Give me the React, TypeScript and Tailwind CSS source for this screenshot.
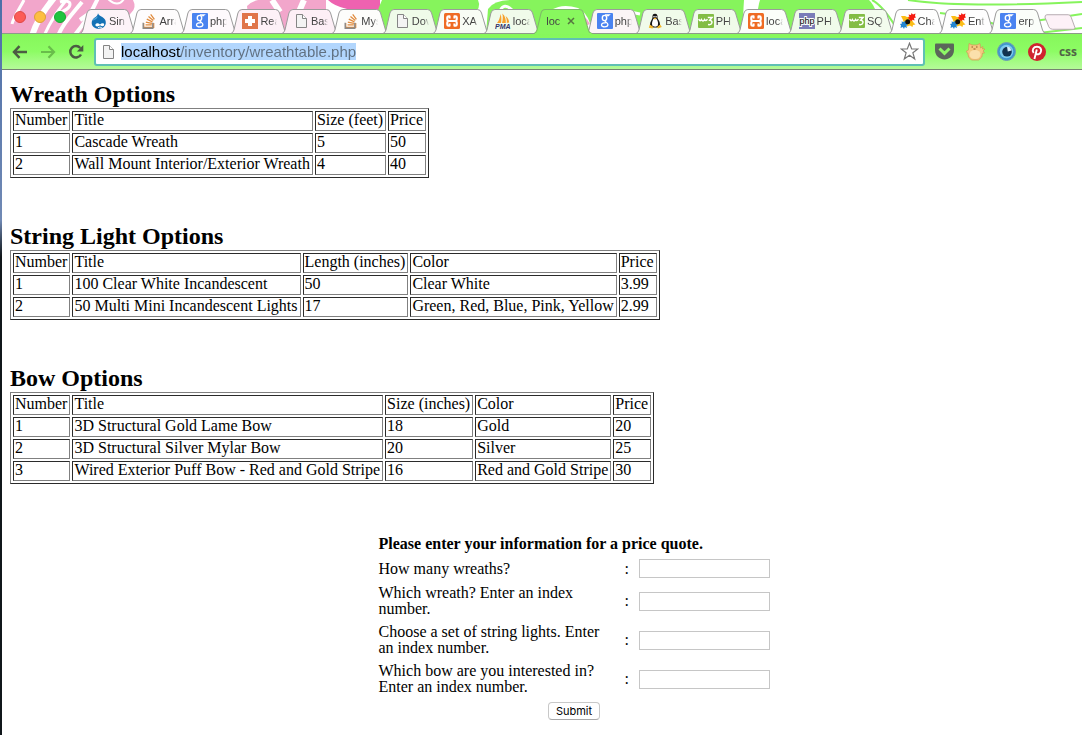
import React, { useState } from 'react';
import { FaStackOverflow } from 'react-icons/fa';

interface Tab {
  icon: keyof typeof icons | null;
  label: string;
  active?: boolean;
  fill?: string;
}

interface Options {
  title: string;
  columns: string[];
  rows: string[][];
}

const DrupalIcon = () => (
  <svg width="16" height="16" viewBox="0 0 16 16">
    <path d="M7 0.3C7.5 2.2 9.5 2.9 11.3 4C13.6 5.4 15 7.3 14.8 10C14.6 13.5 11.6 15.7 8 15.7C4.4 15.7 0.7 13.6 0.7 9.9C0.7 7.5 2 5.8 3.8 4.6C5.5 3.4 6.8 2.3 7 0.3Z" fill="#1571b5" />
    <path d="M1.3 8C2.4 5.3 5 4.8 6.6 3.3C6.5 6 3.8 6.7 1.3 8Z" fill="#54a7dc" />
    <path d="M4.4 11.8C5 9.8 7.2 9.8 9 11.4C10.4 10 13 9.6 13.2 11.6C13.3 13.4 11 13.6 9.2 12.3C7.4 13.8 4.2 14 4.4 11.8Z" fill="#fff" />
    <path d="M7 14.6Q8.9 13.7 10.8 14.5" stroke="#fff" strokeWidth="0.9" fill="none" />
  </svg>
);

const StackIcon = () => (
  <span className="relative block">
    <FaStackOverflow size={16} className="text-[#e08a3c]" />
    <svg className="absolute inset-0" width="16" height="16" viewBox="0 0 16 16">
      <path d="M2.2 9.8V15.2H11.8V9.8" fill="none" stroke="#8a8a8a" strokeWidth="1.4" />
    </svg>
  </span>
);

const GoogleIcon = () => (
  <svg width="16" height="16" viewBox="0 0 16 16">
    <rect width="16" height="16" rx="1" fill="#4a83f0" />
    <ellipse cx="7.5" cy="5" rx="2.2" ry="2.6" fill="none" stroke="#fff" strokeWidth="1.4" />
    <path d="M8 2H12L10.5 3.2M8.6 7.4C6.8 8.8 10.9 9.2 10.9 11.5C10.9 14.6 4.5 14.5 4.5 12C4.5 10.2 7 9.7 9 9.7" fill="none" stroke="#fff" strokeWidth="1.3" />
  </svg>
);

const CrossIcon = () => (
  <svg width="16" height="16" viewBox="0 0 16 16">
    <rect width="16" height="16" fill="#e0754a" />
    <path d="M6 3H10V6H13V10H10V13H6V10H3V6H6Z" fill="#fff" />
  </svg>
);

const PageIcon = () => (
  <svg width="16" height="16" viewBox="0 0 16 16">
    <path d="M3.5 1.5H9.5L13.5 5.5V14.5H3.5Z" fill="#f3f3f3" stroke="#858585" />
    <path d="M9.5 1.5V5.5H13.5" fill="#fff" stroke="#858585" />
  </svg>
);

const XamppIcon = () => (
  <svg width="16" height="16" viewBox="0 0 16 16">
    <rect width="16" height="16" rx="1.5" fill="#ef6c24" />
    <path d="M4.6 3.2Q3.2 3.2 3.2 4.6V6Q3.2 8 5.2 8H10.8Q12.8 8 12.8 6V4.6Q12.8 3.2 11.4 3.2H10.4V5.4M5.6 5.4V3.2H4.6M4.6 12.8Q3.2 12.8 3.2 11.4V10Q3.2 8 5.2 8H10.8Q12.8 8 12.8 10V11.4Q12.8 12.8 11.4 12.8H10.4V10.6M5.6 10.6V12.8H4.6" fill="none" stroke="#fff" strokeWidth="2" strokeLinejoin="round" />
  </svg>
);

const PmaIcon = () => (
  <svg width="16" height="16" viewBox="0 0 16 16">
    <path d="M2 10C4 8 5 4 5.6 1C6.6 4 6.5 7.5 6 10ZM7 10C8 7 8 3 7.3 0.5C10.3 3 11 7 10.8 10ZM11.8 10C12 7 11.3 4.5 10.5 3C13.2 5 14 7.5 14.2 9.5Z" fill="#f7a12c" />
    <text x="0" y="16" fontSize="7" fontWeight="700" fontStyle="italic" fontFamily="Liberation Sans" fill="#33336b">PMA</text>
  </svg>
);

const TuxIcon = () => (
  <svg width="16" height="16" viewBox="0 0 16 16">
    <path d="M8 0.8C10.3 0.8 10.7 2.6 10.5 4.6C10.6 6.4 13.3 8.6 13 12L10.5 14.5H5.5L3 12C2.8 8.8 5.4 6.5 5.5 4.5C5.3 2.5 5.8 0.8 8 0.8Z" fill="#151515" />
    <path d="M6.4 6H9.6C10.8 8 11.5 9.5 10.8 12.5C10 14 6.5 14 5.3 12.5C4.5 10 5.5 8 6.4 6Z" fill="#fff" />
    <circle cx="7" cy="3.7" r="0.8" fill="#fff" />
    <circle cx="9.1" cy="3.7" r="0.8" fill="#fff" />
    <path d="M6.3 5.3Q8 4 9.8 5.3L8 6.7ZM2.8 11.5L6.5 14L5.5 15.5L1.8 14.7ZM13.2 11.5L14.8 14L11 15.6L9.8 14.2Z" fill="#f2b62c" />
  </svg>
);

const W3Icon = () => (
  <svg width="16" height="16" viewBox="0 0 16 16">
    <rect y="1" width="16" height="14" rx="1" fill="#83bd45" />
    <path d="M0.8 6Q2 9 3.4 6.6Q5 9.4 6.6 6.6Q7.8 8.6 9.4 6.2M9.8 4.6H14L11.8 7.2C15.2 7.6 14.6 12.4 10 11.6" fill="none" stroke="#fff" strokeWidth="1.5" />
  </svg>
);

const PhpIcon = () => (
  <svg width="16" height="16" viewBox="0 0 16 16">
    <rect width="16" height="16" fill="#7a7cb8" />
    <text x="8" y="10.5" textAnchor="middle" fontSize="9" fontFamily="Liberation Sans" fill="#000" stroke="#fff" strokeWidth="1.8" paintOrder="stroke">php</text>
  </svg>
);

const StarIcon = () => (
  <svg width="16" height="16" viewBox="0 0 16 16">
    <path d="M1 3H5L7 4L10 3.5L12 6.5L13 9L15.5 11.5L13 12L12.5 14L10 12.5L7 13.5L4 11L3 7Z" fill="#fbbd16" />
    <path d="M7.8 4.8L9.5 4L8.5 1.5L11 2L11.5 0L13 1.5L15.5 0.5L15 3L16 4.5L14 5L14.5 7.5L12.3 6.8L11.2 8.3Z" fill="#f51b12" />
    <path d="M7.8 11.8L6.3 12.3L7 15L4.8 14L4 16L2.8 14L0.5 15L1 12.5L0 11L2 10.5L1.5 8.5L3.8 9L5 7.8Z" fill="#2385d0" />
    <circle cx="7.7" cy="8.8" r="2.5" fill="#151008" />
  </svg>
);

const icons = {
  drupal: DrupalIcon,
  stack: StackIcon,
  google: GoogleIcon,
  cross: CrossIcon,
  page: PageIcon,
  xampp: XamppIcon,
  pma: PmaIcon,
  tux: TuxIcon,
  w3: W3Icon,
  php: PhpIcon,
  star: StarIcon,
};

const tabs: Tab[] = [
  { icon: 'drupal', label: 'Sin', fill: '#fdf3f8' },
  { icon: 'stack', label: 'Arra', fill: '#fefcfd' },
  { icon: 'google', label: 'php', fill: '#fef9fc' },
  { icon: 'cross', label: 'Rea', fill: '#fdf1f7' },
  { icon: 'page', label: 'Bas', fill: '#fdeff6' },
  { icon: 'stack', label: 'Mys', fill: '#fdfdfb' },
  { icon: 'page', label: 'Dov', fill: '#effbe9' },
  { icon: 'xampp', label: 'XA', fill: '#f8fdf5' },
  { icon: 'pma', label: 'loca', fill: '#f0fbea' },
  { icon: null, label: 'loc', active: true },
  { icon: 'google', label: 'php', fill: '#fbf5f6' },
  { icon: 'tux', label: 'Bas', fill: '#f0fbea' },
  { icon: 'w3', label: 'PH', fill: '#f0fbea' },
  { icon: 'xampp', label: 'loca', fill: '#fbfefa' },
  { icon: 'php', label: 'PH', fill: '#f0fbea' },
  { icon: 'w3', label: 'SQ', fill: '#f3fcee' },
  { icon: 'star', label: 'Cha', fill: '#fefefe' },
  { icon: 'star', label: 'Ent', fill: '#fefefe' },
  { icon: 'google', label: 'erp', fill: '#fbfefa' },
];

const tables: Options[] = [
  {
    title: 'Wreath Options',
    columns: ['Number', 'Title', 'Size (feet)', 'Price'],
    rows: [
      ['1', 'Cascade Wreath', '5', '50'],
      ['2', 'Wall Mount Interior/Exterior Wreath', '4', '40'],
    ],
  },
  {
    title: 'String Light Options',
    columns: ['Number', 'Title', 'Length (inches)', 'Color', 'Price'],
    rows: [
      ['1', '100 Clear White Incandescent', '50', 'Clear White', '3.99'],
      ['2', '50 Multi Mini Incandescent Lights', '17', 'Green, Red, Blue, Pink, Yellow', '2.99'],
    ],
  },
  {
    title: 'Bow Options',
    columns: ['Number', 'Title', 'Size (inches)', 'Color', 'Price'],
    rows: [
      ['1', '3D Structural Gold Lame Bow', '18', 'Gold', '20'],
      ['2', '3D Structural Silver Mylar Bow', '20', 'Silver', '25'],
      ['3', 'Wired Exterior Puff Bow - Red and Gold Stripe', '16', 'Red and Gold Stripe', '30'],
    ],
  },
];

const questions = [
  { id: 'wreathCount', label: 'How many wreaths?' },
  { id: 'wreathIndex', label: 'Which wreath? Enter an index number.' },
  { id: 'lightIndex', label: 'Choose a set of string lights. Enter an index number.' },
  { id: 'bowIndex', label: 'Which bow are you interested in? Enter an index number.' },
];

// Painted theme image behind the tabs
const ThemeArt = () => (
  <svg className="absolute inset-0 w-full h-full" viewBox="2 0 1080 34" preserveAspectRatio="none">
    <rect x="2" width="1080" height="34" fill="#fff" />
    <path d="M2 0H133Q137 8 131 13L112 34H2Z" fill="#f2a6cb" />
    <path d="M24 0C20 8 14 16 12 24" stroke="#fff" strokeWidth="3" fill="none" />
    <path d="M54 -2C44 10 36 22 32 36" stroke="#fff" strokeWidth="6" fill="none" />
    <path d="M68 -2C58 10 50 22 44 36M60 2C72 -2 76 8 56 14" stroke="#fff" strokeWidth="3" fill="none" />
    <path d="M82 2C74 12 62 24 58 36M98 -2C92 12 84 24 74 36M80 20L94 10" stroke="#fff" strokeWidth="4" fill="none" />
    <path d="M108 -1Q118 8 124 -1" stroke="#fff" strokeWidth="2" fill="none" />
    <path d="M247 6Q256 -2 266 0H326V34H250Z" fill="#f2a6cb" />
    <path d="M272 0L280 12M304 0L298 14" stroke="#fff" strokeWidth="6" />
    <path d="M328 0H380V12Q340 12 328 0Z" fill="#ee62b0" />
    <path d="M382 0H478Q482 8 472 16L462 34H376Q374 16 382 0Z" fill="#86f45c" />
    <path d="M488 9Q494 0 512 0H744L742 34H486Z" fill="#86f45c" />
    <path d="M552 10Q562 3 578 8Q590 14 592 34H578Z" fill="#fff" />
    <path d="M568 10Q584 12 590 24L580 28Z" fill="#f2a6cb" />
    <path d="M500 11Q504 2 512 10M630 12L640 14" stroke="#fff" strokeWidth="3" fill="none" />
    <path d="M760 0H869Q878 8 880 34H758Q756 12 760 0Z" fill="#86f45c" />
    <path d="M872 0Q884 6 900 34M908 0Q960 8 1082 2M940 13Q980 18 1000 26L1082 14M1030 34L1082 28" stroke="#86f45c" strokeWidth="2" fill="none" />
  </svg>
);

const BrowserTab: React.FC<{ tab: Tab }> = ({ tab }) => {
  const Icon = tab.icon ? icons[tab.icon] : null;
  return (
    <button
      type="button"
      className={`relative flex-1 min-w-0 h-full flex items-center gap-[2px] pb-px ${tab.active ? 'z-20 pl-3' : 'z-10 pl-[11px]'}`}
    >
      <svg className="absolute left-0 top-0 w-[calc(100%+7px)] h-full" viewBox="0 0 58 25" preserveAspectRatio="none">
        <path
          d="M0 24.5Q2 24 3 21L7 4Q8 0.5 11 0.5H45Q48 0.5 49 4L54 21Q55 24.5 58 24.5"
          fill={tab.active ? '#88f75e' : tab.fill}
          stroke={tab.active ? '#7fb968' : '#9a9a9a'}
        />
        {tab.active && <path d="M1 25H57" stroke="#88f75e" strokeWidth="2" />}
      </svg>
      {Icon && <span className="relative shrink-0"><Icon /></span>}
      <span className="relative w-[17px] overflow-hidden whitespace-nowrap text-left text-[11px] leading-4 text-[#444] mask-r-from-70%">
        {tab.label}
      </span>
      {tab.active && (
        <svg className="relative ml-[2px] shrink-0" width="8" height="8" viewBox="0 0 8 8">
          <path d="M1 1L7 7M7 1L1 7" stroke="#56763f" strokeWidth="1.5" />
        </svg>
      )}
    </button>
  );
};

const TabStrip = () => (
  <div className="relative h-[34px] flex items-end">
    <ThemeArt />
    <div className="relative z-30 shrink-0 flex gap-2 pl-3 pr-[14px] pb-[11px]">
      <span className="w-3 h-3 rounded-full bg-[#fc5b57] border border-[#df4744]"></span>
      <span className="w-3 h-3 rounded-full bg-[#fdbe41] border border-[#dea034]"></span>
      <span className="w-3 h-3 rounded-full bg-[#1fc43f] border border-[#17a934]"></span>
    </div>
    <div className="flex-1 min-w-0 flex h-[25px]">
      {tabs.map((tab, idx) => <BrowserTab key={idx} tab={tab} />)}
    </div>
    <button type="button" aria-label="New tab" className="relative shrink-0 ml-1 mr-[6px] mb-[3px]">
      <svg width="32" height="17" viewBox="0 0 33 17">
        <path d="M3 0.5H25Q27 0.5 28 3L32 14Q32 15.5 30 15.5H9Q6 15.5 5 13L1 3Q1 0.5 3 0.5Z" fill="#fdf1f7" stroke="#b5a9ae" />
      </svg>
    </button>
    <div className="absolute inset-x-0 bottom-0 z-10 h-px bg-[#8d9b88]"></div>
  </div>
);

const Toolbar = () => (
  <div className="h-9 flex items-center pl-[10px] pr-1 bg-linear-to-b from-[#86f75b] via-[#8dfc64] to-[#b4fa98] border-b border-[#768271]">
    <div className="flex items-center gap-3 shrink-0">
      <button type="button" aria-label="Back">
        <svg width="16" height="16" viewBox="0 0 16 16">
          <path d="M15 8H2M7.5 2.2L2 8L7.5 13.8" fill="none" stroke="#4c5c43" strokeWidth="2.5" />
        </svg>
      </button>
      <button type="button" aria-label="Forward">
        <svg width="16" height="16" viewBox="0 0 16 16">
          <path d="M1 8H14M8.5 2.2L14 8L8.5 13.8" fill="none" stroke="#69bd4b" strokeWidth="2.2" />
        </svg>
      </button>
      <button type="button" aria-label="Reload">
        <svg width="16" height="16" viewBox="0 0 16 16">
          <path d="M13 10.5A5.7 5.7 0 1 1 12.3 4" fill="none" stroke="#4c5c43" strokeWidth="2.5" />
          <path d="M15.3 1V7.5H8.8Z" fill="#4c5c43" />
        </svg>
      </button>
    </div>
    <div className="flex-1 min-w-0 h-7 ml-[10px] mr-[10px] px-1 flex items-center bg-white rounded-[3px] border-2 border-[#5fc0b4]">
      <PageIcon />
      {/* whole address is selected, host darker than the path */}
      <div className="flex ml-[5px] bg-[#b2d6fd]">
        <input
          type="text"
          aria-label="Address"
          defaultValue="localhost/inventory/wreathtable.php"
          className="field-sizing-content h-[17px] text-[15px] leading-[17px] outline-none text-transparent bg-clip-text bg-linear-to-r from-black from-[60px] to-[#5f6f80] to-[60px]"
        />
      </div>
      <button type="button" aria-label="Bookmark" className="ml-auto">
        <svg width="19" height="19" viewBox="0 0 19 19">
          <path d="M9.5 1.2L11.7 7H17.8L12.9 10.8L14.7 17L9.5 13.3L4.3 17L6.1 10.8L1.2 7H7.3Z" fill="#fff" stroke="#777" strokeWidth="1.2" />
        </svg>
      </button>
    </div>
    <div className="flex items-center gap-3 shrink-0">
      <button type="button" aria-label="Pocket">
        <svg width="19" height="17" viewBox="0 0 19 17">
          <path d="M1 0.5H18Q19 0.5 19 1.5V7C19 13 14 16.5 9.5 16.5S0 13 0 7V1.5Q0 0.5 1 0.5Z" fill="#5b665a" />
          <path d="M4.5 5.5L9.5 10.3L14.5 5.5" fill="none" stroke="#8df766" strokeWidth="3" />
        </svg>
      </button>
      <button type="button" aria-label="Cat">
        <svg width="19" height="19" viewBox="0 0 19 19">
          <path d="M3 1.5L6 3H11L14 1.5L14.5 6L17 4.5L16.5 7L19 7L17 9L18.5 11L16.5 11Q17 15.5 12.5 18H5.5Q1.5 15.5 1.8 11L0 9.5L2.5 8Z" fill="#f4c981" stroke="#d09a55" strokeWidth="0.7" />
          <ellipse cx="9" cy="12.5" rx="5.5" ry="4.5" fill="#fbe0ab" />
          <path d="M5.5 5H7M10 5H11.5M7.5 7H9.5" stroke="#8d5928" strokeWidth="1.1" />
        </svg>
      </button>
      <button type="button" aria-label="Eye">
        <svg width="19" height="19" viewBox="0 0 19 19">
          <circle cx="9.5" cy="9.5" r="9" fill="#3f97cc" stroke="#6f9db0" />
          <circle cx="9.5" cy="9.5" r="6.8" fill="#7cc9ee" />
          <circle cx="10" cy="9.8" r="4.8" fill="#123250" />
          <path d="M10 4.5L10.8 9.5L14.5 8.5L13 5.5Z" fill="#d8f0fb" />
        </svg>
      </button>
      <button type="button" aria-label="Pinterest">
        <svg width="18" height="18" viewBox="0 0 18 18">
          <circle cx="9" cy="9" r="9" fill="#d0232e" />
          <path d="M6.4 16L8.8 6.5M5.7 10C3.5 7 5.5 3.8 9 3.8C12.5 3.8 13.8 6.2 12.8 9C12 11.7 9 12 8 10.2" fill="none" stroke="#fff" strokeWidth="1.9" />
        </svg>
      </button>
      <button type="button" className="w-5 text-[12px] leading-4 font-bold text-[#516447] font-['Open_Sans',sans-serif] text-center">css</button>
    </div>
  </div>
);

const OptionsTable: React.FC<{ options: Options }> = ({ options }) => {
  const cell = 'border border-t-[#2b2b2b] border-l-[#2b2b2b] border-b-[#808080] border-r-[#808080] pt-0 pb-[2px] pl-px pr-[2px] text-left font-normal whitespace-nowrap';
  return (
    <section className="mb-11">
      <h2 className="text-[24px] leading-7 font-bold">{options.title}</h2>
      <table className="border-separate border-spacing-[2px] border border-t-[#808080] border-l-[#808080] border-b-[#2b2b2b] border-r-[#2b2b2b]">
        <thead>
          <tr>{options.columns.map(c => <th key={c} className={cell}>{c}</th>)}</tr>
        </thead>
        <tbody>
          {options.rows.map(row => (
            <tr key={row[0]}>{row.map((value, i) => <td key={i} className={cell}>{value}</td>)}</tr>
          ))}
        </tbody>
      </table>
    </section>
  );
};

const QuoteForm = () => {
  const [values, setValues] = useState<Record<string, string>>({});

  return (
    <div className="pl-16 pt-2">
      <form
        onSubmit={e => e.preventDefault()}
        className="w-fit mx-auto grid grid-cols-[240px_8px_131px] gap-x-[6px] gap-y-[7px] items-center"
      >
        <strong className="col-span-3">Please enter your information for a price quote.</strong>
        {questions.map(q => (
          <React.Fragment key={q.id}>
            <label htmlFor={q.id} className="pr-4">{q.label}</label>
            <span>:</span>
            <input
              id={q.id}
              type="text"
              value={values[q.id] || ''}
              onChange={e => setValues({ ...values, [q.id]: e.target.value })}
              className="w-full h-[19px] px-1 text-[11px] bg-white border border-[#c6c6c6]"
            />
          </React.Fragment>
        ))}
        <div className="col-span-3 flex justify-center">
          <button
            type="submit"
            className="h-[18px] px-[7px] rounded-[4px] border border-[#c8c8c8] border-b-[#a9a9a9] bg-white font-['Inter',sans-serif] text-[11px] leading-4"
          >
            Submit
          </button>
        </div>
      </form>
    </div>
  );
};

const App: React.FC = () => {
  return (
    <div className="flex min-h-screen bg-white">
      <div className="w-[2px] shrink-0 bg-linear-to-b from-[#4d6fa8] via-[#7089b4] via-30% to-[#10161a] to-35%"></div>
      <div className="flex-1 min-w-0 flex flex-col">
        <header className="font-['Liberation_Sans',sans-serif]">
          <TabStrip />
          <Toolbar />
        </header>
        <main className="flex-1 px-2 pt-[10px] text-black text-[16px] leading-4 font-['Liberation_Serif',serif]">
          {tables.map(t => <OptionsTable key={t.title} options={t} />)}
          <QuoteForm />
        </main>
      </div>
    </div>
  );
};

export default App;
